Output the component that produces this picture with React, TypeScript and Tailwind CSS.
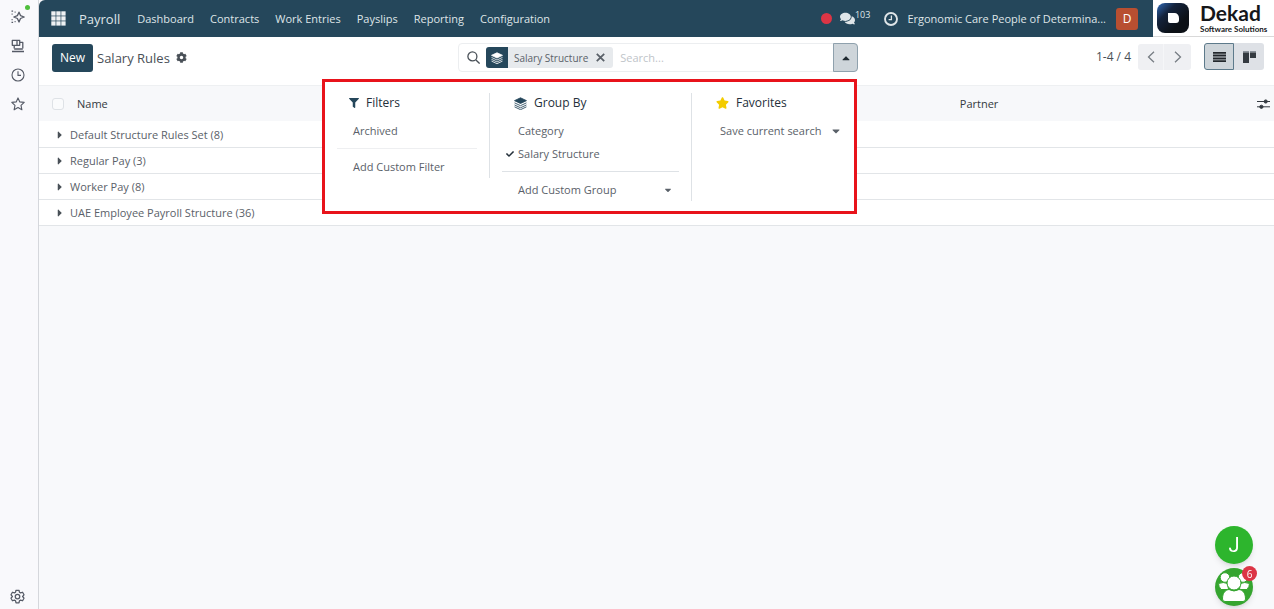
import React, { useState } from 'react';
import { FaCaretDown, FaCaretRight, FaCaretUp, FaCheck, FaCog, FaComments, FaFilter, FaStar } from 'react-icons/fa';

const menus = ['Dashboard', 'Contracts', 'Work Entries', 'Payslips', 'Reporting', 'Configuration'];

const groups = [
  { name: 'Default Structure Rules Set', count: 8 },
  { name: 'Regular Pay', count: 3 },
  { name: 'Worker Pay', count: 8 },
  { name: 'UAE Employee Payroll Structure', count: 36 },
];

function LayersIcon({ className }: { className?: string }) {
  return (
    <svg viewBox="0 0 24 24" className={className} fill="none" stroke="currentColor" strokeWidth="1.6" strokeLinejoin="round">
      <path d="M12 1.500 23 6.700 12 12 1 6.700Z" fill="currentColor" />
      <path d="M1 10.800 12 16l11-5.200M1 14.700l11 5.200 11-5.200M1 18.200l11 5.200 11-5.200" />
    </svg>
  );
}

function AppsIcon() {
  return (
    <svg viewBox="0 0 15 15" className="h-[15px] w-[15px]" fill="currentColor">
      {[0, 5, 10].map((y) => [0, 5, 10].map((x) => <rect key={`${x}-${y}`} x={x + 0.3} y={y + 0.3} width="4.3" height="4.3" />))}
    </svg>
  );
}

function Sidebar() {
  const button = 'relative flex h-[14px] w-[14px] items-center justify-center text-[#555a66]';
  return (
    <aside className="flex w-[39px] shrink-0 flex-col items-center justify-between border-r border-[#d5d7dc] bg-[#f9f9fc] pr-[3px] pt-[10px] pb-[6px]">
      <div className="flex flex-col gap-[15px]">
        <button className={button} aria-label="Assistant">
          <svg viewBox="0 0 14 14" className="h-[14px] w-[14px] shrink-0" fill="none" stroke="currentColor" strokeWidth="1.3" strokeLinejoin="round">
            <path d="M8 2.2 9.500 5.600 13.200 7 9.500 8.500 8 12 6.400 8.500 2.800 7 6.400 5.600Z" />
            <path d="M.5 1.200h1.600M3.600 2.200h1M.6 4.200h1M.6 9.600h1M.5 12.400h1.600M3.600 11.600h1" strokeWidth="1.200" />
          </svg>
          <span className="absolute -right-[5px] -top-[5px] h-[5px] w-[5px] rounded-full bg-[#4fbf3c]" />
        </button>
        <button className={button} aria-label="Devices">
          <svg viewBox="0 0 14 14" className="h-[14px] w-[14px] shrink-0" fill="none" stroke="currentColor" strokeWidth="1.3" strokeLinejoin="round">
            <path d="M1.300 1.300h7.400v5H1.300ZM6 1.300v5M8.700 3.400h3.100v6.200M3.200 6.300v3.300" />
            <path d="M3.200 10h8.600M1 12.500h12" strokeWidth="1.700" />
          </svg>
        </button>
        <button className={button} aria-label="History">
          <svg viewBox="0 0 14 14" className="h-[14px] w-[14px] shrink-0" fill="none" stroke="currentColor" strokeWidth="1.1">
            <circle cx="7" cy="7" r="6" />
            <path d="M7 3.2V7.4h3" />
          </svg>
        </button>
        <button className={button} aria-label="Bookmarks">
          <svg viewBox="0 0 14 14" className="h-[14px] w-[14px] shrink-0" fill="none" stroke="currentColor" strokeWidth="1.1" strokeLinejoin="round">
            <path d="M7 .9 8.8 4.9l4.4.5-3.2 3 .9 4.4L7 10.6 3.1 12.8l.9-4.4-3.2-3 4.4-.5Z" />
          </svg>
        </button>
      </div>
      <button className={button} aria-label="Settings">
        <svg viewBox="0 0 24 24" className="h-[15px] w-[15px] shrink-0" fill="none" stroke="currentColor" strokeWidth="2" strokeLinejoin="round">
          <path d="M9.6 2h4.8l.7 3.1 1.9 1.1 3.1-1 2.3 4.1L20.1 12l2.3 2.7-2.3 4.1-3.1-1-1.9 1.1-.7 3.1H9.6l-.7-3.1L7 17.8l-3.1 1-2.3-4.1L3.900 12 1.600 9.300l2.300-4.100 3.100 1 1.900-1.100Z" />
          <circle cx="12" cy="12" r="3.600" />
        </svg>
      </button>
    </aside>
  );
}

function BrandLogo() {
  return (
    <div className="flex w-[121px] shrink-0 items-center gap-[11px] border-b border-[#d9d9d9] bg-white pl-1">
      <svg viewBox="0 0 32 30" className="h-[30px] w-8 shrink-0">
        <defs>
          <linearGradient id="brand" x1="0" y1="0" x2="0.7" y2="0.7">
            <stop offset="0" stopColor="#2f6ab8" />
            <stop offset="0.45" stopColor="#14233c" />
            <stop offset="1" stopColor="#0c1016" />
          </linearGradient>
        </defs>
        <rect width="32" height="30" rx="8" fill="url(#brand)" />
        <path d="M11 10h6.500a4.500 5 0 0 1 4.500 5v2a3 3 0 0 1-3 3h-6a2 2 0 0 1-2-2Z" fill="#fff" />
      </svg>
      <div className="flex flex-col whitespace-nowrap font-[Lato,sans-serif] text-[#15171a]">
        <span className="text-[21px] font-bold leading-[22px]">Dekad</span>
        <span className="text-[8px] font-bold leading-[10px]">Software Solutions</span>
      </div>
    </div>
  );
}

function TopBar() {
  return (
    <header className="flex h-[37px] bg-[#f9f9fc]">
      <div className="flex min-w-0 flex-1 items-center rounded-tl-md bg-[#25475b] pl-3 pr-[15px] text-[#dfe5e8]">
        <button aria-label="Apps" className="text-[#eef1f3]"><AppsIcon /></button>
        <a href="#payroll" className="ml-[13px] text-[13px]">Payroll</a>
        <nav className="ml-[17px] flex gap-4 whitespace-nowrap">
          {menus.map((menu) => (
            <a key={menu} href={`#${menu.toLowerCase().replace(' ', '-')}`}>{menu}</a>
          ))}
        </nav>
        <div className="ml-auto flex items-center whitespace-nowrap">
          <span className="h-[11px] w-[11px] rounded-full bg-[#dc3545]" />
          <button className="ml-2 flex items-center" aria-label="Messages">
            <FaComments className="h-[15px] w-[15px]" />
            <span className="mb-2 text-[9px] leading-[12px]">103</span>
          </button>
          <button className="ml-[14px]" aria-label="Activities">
            <svg viewBox="0 0 14 14" className="h-[14px] w-[14px]" fill="none" stroke="currentColor">
              <circle cx="7" cy="7" r="6" strokeWidth="1.900" />
              <path d="M7.400 3.600V7.700H4.600" strokeWidth="1.300" />
            </svg>
          </button>
          <button className="ml-[9px]">Ergonomic Care People of Determina...</button>
          <button className="ml-[10px] flex h-[22px] w-[22px] items-center justify-center rounded-[3px] bg-[#b84f31] text-[12px] text-white">D</button>
        </div>
      </div>
      <BrandLogo />
    </header>
  );
}

function SearchMenu() {
  const heading = 'mb-1.5 flex h-5 items-center gap-[7px] pl-3 text-[12px] text-[#25303b]';
  const item = 'relative flex h-[23px] w-full items-center whitespace-nowrap pl-4';
  return (
    <div className="absolute right-0 top-[35px] z-10 flex w-[535px] items-start border-[3px] border-[#e8131b] bg-white pt-[11px] pb-[10px] text-[#5a6169]">
      <section className="w-[165px] shrink-0 border-r border-[#dee2e6] px-3">
        <h2 className={heading}><FaFilter className="h-[10px] w-[10px] text-[#25475b]" />Filters</h2>
        <button className={item}>Archived</button>
        <hr className="my-1.5 border-[#eeeff1]" />
        <button className={item}>Add Custom Filter</button>
      </section>
      <section className="w-[202px] shrink-0 border-r border-[#dee2e6] px-3">
        <h2 className={heading}><LayersIcon className="h-[13px] w-[13px] text-[#25475b]" />Group By</h2>
        <button className={item}>Category</button>
        <button className={item}>
          <FaCheck className="absolute left-1 h-2 w-2 text-[#25303b]" />
          Salary Structure
        </button>
        <hr className="my-1.5 border-[#dee2e6]" />
        <button className={item}>Add Custom Group<FaCaretDown className="ml-auto mr-1.5 h-[10px] w-[10px]" /></button>
      </section>
      <section className="min-w-0 flex-1 px-3">
        <h2 className={heading}><FaStar className="h-[12px] w-[13px] text-[#f3cc00]" />Favorites</h2>
        <button className={item}>Save current search<FaCaretDown className="ml-[9px] h-3 w-3 shrink-0" /></button>
      </section>
    </div>
  );
}

function SearchBar() {
  const [grouped, setGrouped] = useState(true);
  const [open, setOpen] = useState(true);
  return (
    <div className="relative flex h-[29px] w-[400px] shrink-0 items-center rounded border border-[#eceef0] bg-white pl-2">
      <svg viewBox="0 0 13 13" className="h-[13px] w-[13px] shrink-0 text-[#495057]" fill="none" stroke="currentColor" strokeWidth="1.3">
        <circle cx="5.4" cy="5.4" r="4.500" />
        <path d="m8.700 8.700 3.900 3.900" />
      </svg>
      {grouped && (
        <div className="ml-[6px] flex h-[21px] shrink-0 items-center overflow-hidden rounded-[3px] bg-[#e7eaed] text-[10px] text-[#5a6169]">
          <span className="flex h-full w-[22px] items-center justify-center bg-[#25475b] text-white"><LayersIcon className="h-3 w-3" /></span>
          <span className="ml-[6px] whitespace-nowrap">Salary Structure</span>
          <button className="px-2" aria-label="Remove" onClick={() => setGrouped(false)}>
            <svg viewBox="0 0 9 9" className="h-[9px] w-[9px]" stroke="currentColor" strokeWidth="1.800"><path d="m.8.8 7.400 7.400M8.200.8.8 8.200" /></svg>
          </button>
        </div>
      )}
      <input type="text" aria-label="Search" placeholder="Search..." className="ml-[7px] min-w-0 flex-1 outline-none placeholder:text-[#c0c4c9]" />
      <button
        aria-label="Toggle search panel"
        onClick={() => setOpen(!open)}
        className="-mr-px flex h-[29px] w-[25px] shrink-0 items-center justify-center rounded-r border border-[#8fa1ad] bg-[#ced5da] text-[#1f2930]"
      >
        <FaCaretUp className="h-3 w-3" />
      </button>
      {open && <SearchMenu />}
    </div>
  );
}

function ControlPanel() {
  return (
    <div className="flex h-[49px] items-start border-b border-[#eef0f2] bg-white pl-[13px] pr-[10px] pt-[6px]">
      <div className="flex flex-1 items-center">
        <button className="mt-px h-[28px] w-[41px] rounded-[3px] bg-[#25475b] text-[12px] text-white">New</button>
        <h1 className="ml-1 whitespace-nowrap text-[13px] text-[#495057]">Salary Rules</h1>
        <button className="ml-[6px] text-[#495057]" aria-label="Actions"><FaCog className="h-[11px] w-[11px]" /></button>
      </div>
      <SearchBar />
      <div className="flex flex-1 items-center justify-end">
        <span className="text-[12px] text-[#495057]">1-4 / 4</span>
        <div className="ml-[7px] flex h-[26px] overflow-hidden rounded-[3px] bg-[#eff0f3] text-[#777d84]">
          <button className="flex w-[26px] items-center justify-center border-r border-[#f5f6f8]" aria-label="Previous">
            <svg viewBox="0 0 8 12" className="h-3 w-2" fill="none" stroke="currentColor" strokeWidth="1.300"><path d="M7 .7 1.500 6 7 11.300" /></svg>
          </button>
          <button className="flex w-[27px] items-center justify-center" aria-label="Next">
            <svg viewBox="0 0 8 12" className="h-3 w-2" fill="none" stroke="currentColor" strokeWidth="1.300"><path d="M1 .7 6.500 6 1 11.300" /></svg>
          </button>
        </div>
        <div className="ml-[13px] flex h-[27px] text-[#23282d]">
          <button className="flex w-[30px] items-center justify-center rounded-l-[3px] border border-[#5d7a8b] bg-[#ced5da]" aria-label="List view">
            <svg viewBox="0 0 13 10" className="h-[10px] w-[13px]" fill="currentColor"><path d="M0 0h13v1.700H0zM0 2.600h13v2H0zM0 5.400h13v2H0zM0 8.300h13V10H0z" /></svg>
          </button>
          <button className="flex w-[30px] items-center justify-center rounded-r-[3px] bg-[#dee1e6] text-[#343a40]" aria-label="Kanban view">
            <svg viewBox="0 0 13 12" className="h-3 w-[13px]"><path d="M0 0h6v1.500H0zM7 0h6v1.500H7z" fill="#8c939b" /><path d="M0 1.500h6V12H0zM7 1.500h6V7H7z" fill="currentColor" /></svg>
          </button>
        </div>
      </div>
    </div>
  );
}

function RulesTable() {
  return (
    <table className="w-full table-fixed border-collapse text-left text-[#5a6169]">
      <thead>
        <tr className="h-[35px] bg-[#f7f8fa] text-[#343a40]">
          <th className="w-[38px] pl-[13px]">
            <input type="checkbox" aria-label="Select all" className="block h-3 w-3 appearance-none rounded-[3px] border border-[#dee2e6] bg-[#fafbfc]" />
          </th>
          <th className="font-normal">Name</th>
          <th className="w-[23.5%] font-normal">Partner</th>
          <th className="w-6">
            <button className="block pl-[7px] text-[#343a40]" aria-label="Optional columns">
              <svg viewBox="0 0 13 12" className="h-3 w-[13px]" fill="currentColor" stroke="currentColor" strokeWidth="1"><path d="M0 3.500h13M0 8.800h13" /><circle cx="8.700" cy="3.500" r="1.600" /><circle cx="4.400" cy="8.800" r="1.600" /></svg>
            </button>
          </th>
        </tr>
      </thead>
      <tbody className="bg-white">
        {groups.map((group) => (
          <tr key={group.name} className="h-[26px] border-b border-[#e2e5e8]">
            <th colSpan={4} className="pl-[15px] pt-0.5 font-normal">
              <div className="flex items-center gap-1">
                <FaCaretRight className="h-3 w-3 text-[#495057]" />
                {group.name} ({group.count})
              </div>
            </th>
          </tr>
        ))}
      </tbody>
    </table>
  );
}

function ChatHeads() {
  return (
    <div className="fixed bottom-[3px] right-[21px] flex flex-col gap-1">
      <button className="flex h-[38px] w-[38px] items-center justify-center rounded-full bg-[#2db52d] font-[Roboto,sans-serif] text-[20px] text-white shadow-md">J</button>
      <button className="relative h-[38px] w-[38px] rounded-full bg-[#35a52f] shadow-md" aria-label="Group chat">
        <svg viewBox="0 0 38 38" className="h-full w-full" fill="#fff" stroke="#35a52f" strokeWidth="1">
          <circle cx="10" cy="9.500" r="4.800" />
          <circle cx="28" cy="9.500" r="4.800" />
          <path d="M3.500 15.500q5-2 9 0l1 6H6q-2.500-3-2.500-6ZM34.500 15.500q-5-2-9 0l-1 6H32q2.500-3 2.500-6Z" />
          <circle cx="19" cy="15" r="7" />
          <path d="M7.500 31c0-6.500 3-9 6.500-9.500q5 3 10 0c3.500.5 6.500 3 6.500 9.500q0 2.500-2.500 2.500H10q-2.500 0-2.500-2.500Z" />
        </svg>
        <span className="absolute -right-1 -top-[2px] flex h-[15px] w-[15px] items-center justify-center rounded-full bg-[#dc3545] text-[10px] text-white">6</span>
      </button>
    </div>
  );
}

export default function App() {
  return (
    <div className="flex min-h-screen bg-[#f8f9fb] font-['Open_Sans','Noto_Sans',sans-serif] text-[11px] leading-[18px]">
      <Sidebar />
      <main className="min-w-0 flex-1">
        <TopBar />
        <ControlPanel />
        <RulesTable />
      </main>
      <ChatHeads />
    </div>
  );
}
